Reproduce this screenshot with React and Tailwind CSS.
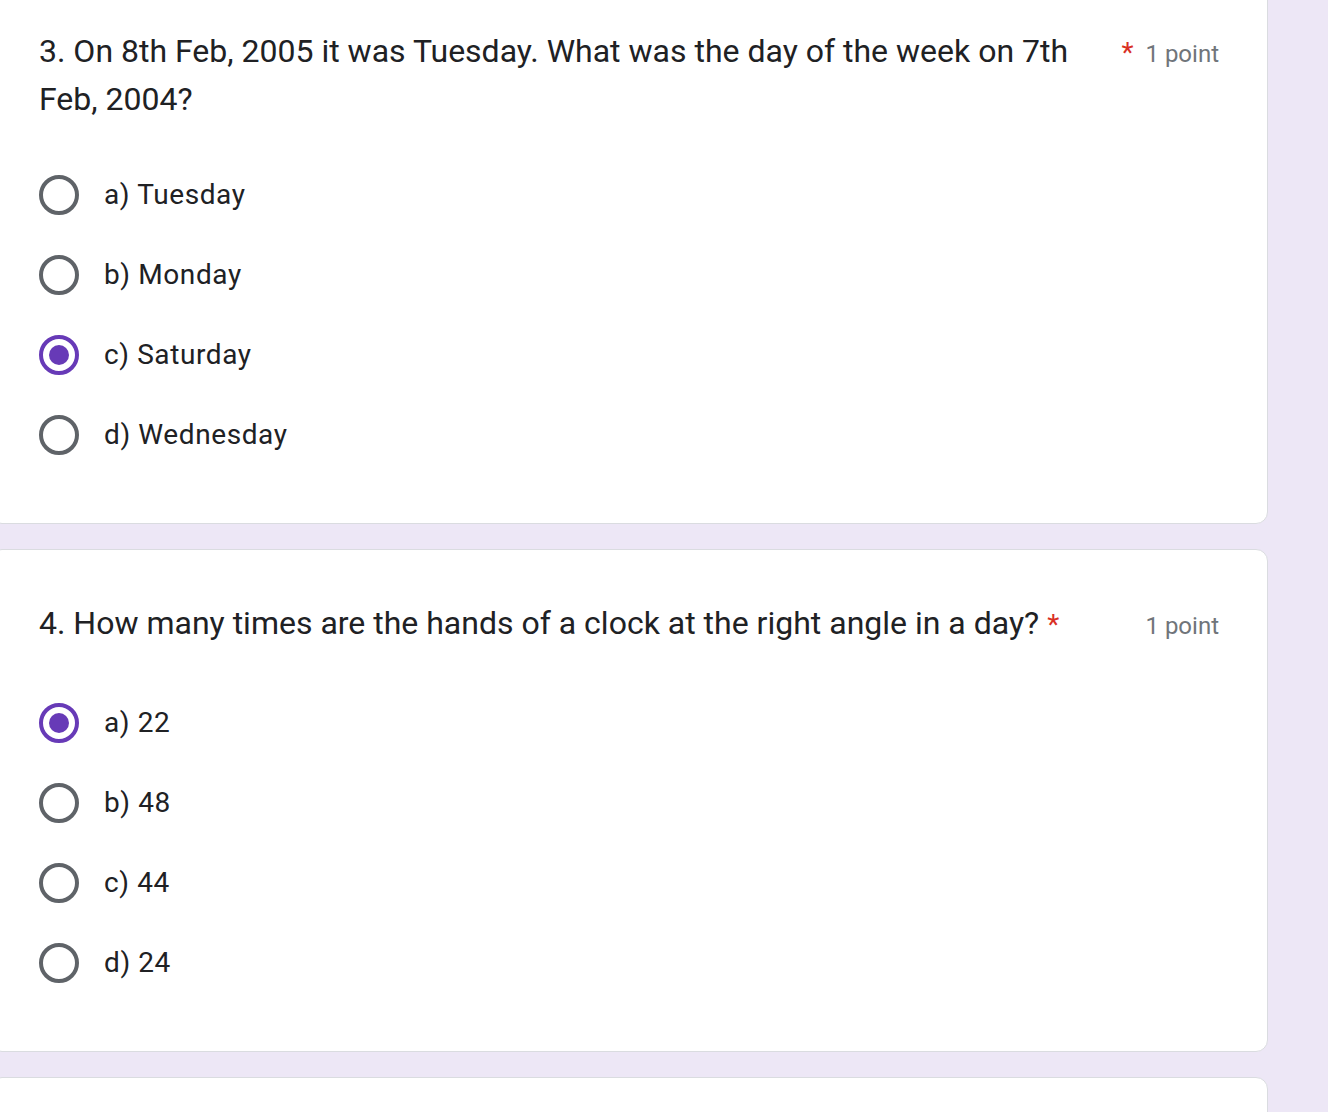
const questions = [
  {
    id: 3,
    title: "3. On 8th Feb, 2005 it was Tuesday. What was the day of the week on 7th Feb, 2004?",
    options: ["a) Tuesday", "b) Monday", "c) Saturday", "d) Wednesday"],
    picked: 2,
    gap: "mt-[52px]",
  },
  {
    id: 4,
    title: "4. How many times are the hands of a clock at the right angle in a day?",
    options: ["a) 22", "b) 48", "c) 44", "d) 24"],
    picked: 0,
    gap: "mt-[54px]",
  },
];

function Radio({ on }) {
  return on ? (
    <span className="grid h-10 w-10 shrink-0 place-content-center rounded-full border-[4px] border-[#673ab7]">
      <span className="block h-5 w-5 rounded-full bg-[#673ab7]" />
    </span>
  ) : (
    <span className="block h-10 w-10 shrink-0 rounded-full border-[4px] border-[#5f6368]" />
  );
}

function QuestionCard({ q }) {
  return (
    <div className="-ml-[10px] w-[1278px] rounded-[12px] border border-[#dadce0] bg-white px-12 pt-[49px] pb-[68px]">
      <div className="flex items-baseline">
        <div className="flex min-w-0 flex-1 items-baseline">
          <span className="min-w-0 text-[32px] leading-[48px] text-[#202124]">{q.title}</span>
          <span className="shrink-0 pl-2 text-[28px] leading-[48px] text-[#d93025]">*</span>
        </div>
        <span className="ml-3 shrink-0 text-[24px] text-[#70757a]">1 point</span>
      </div>

      <div className={`${q.gap} flex flex-col gap-10`}>
        {q.options.map((opt, i) => (
          <label key={opt} className="flex h-10 items-center">
            <Radio on={i === q.picked} />
            <span className="ml-[25px] text-[28px] tracking-[0.6px] text-[#202124]">{opt}</span>
          </label>
        ))}
      </div>
    </div>
  );
}

export default function App() {
  return (
    <div
      className="h-[1112px] overflow-hidden bg-[#ede7f6]"
      style={{ fontFamily: "Roboto, 'Liberation Sans', sans-serif" }}
    >
      <div className="-mt-[23px] flex flex-col gap-[25px]">
        {questions.map((q) => (
          <QuestionCard key={q.id} q={q} />
        ))}
        <div className="-ml-[10px] h-[200px] w-[1278px] rounded-[12px] border border-[#dadce0] bg-white" />
      </div>
    </div>
  );
}
